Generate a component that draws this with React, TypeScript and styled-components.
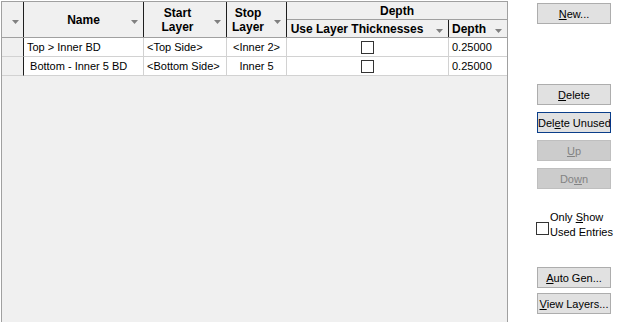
import styled, { createGlobalStyle } from 'styled-components'

const GlobalStyle = createGlobalStyle`
  html, body {
    margin: 0;
    padding: 0;
    background: #ffffff;
  }
  body {
    font-family: "Liberation Sans", Arial, sans-serif;
    font-size: 11px;
    color: #000000;
  }
`

const cols = '22px 120px 83px 60px 162px 58px'

const Page = styled.div`
  display: flex;
  align-items: flex-start;
  width: 620px;
  height: 322px;
  overflow: hidden;
`

const GridPanel = styled.div`
  box-sizing: border-box;
  margin: 1px 0 0 1px;
  width: 507px;
  height: 321px;
  background: #f0f0f0;
  border: 1px solid #a0a0a0;
  border-bottom: none;
`

const Header = styled.div`
  display: grid;
  grid-template-columns: ${cols};
  grid-template-rows: 18px 17px;
  border-bottom: 1px solid #a0a0a0;
`

const HeadCell = styled.div<{ $pr?: number; $left?: boolean; $last?: boolean }>`
  position: relative;
  box-sizing: border-box;
  display: flex;
  align-items: center;
  justify-content: ${p => (p.$left ? 'flex-start' : 'center')};
  text-align: center;
  padding: 0 ${p => p.$pr ?? 0}px 0 ${p => (p.$left ? 3 : 0)}px;
  border-right: ${p => (p.$last ? 'none' : '1px solid #1e1e1e')};
  font-size: 12px;
  font-weight: bold;
  line-height: 14px;
  white-space: nowrap;
`

const TallCell = styled(HeadCell)`
  grid-row: 1 / 3;
`

const GroupCell = styled(HeadCell)`
  grid-column: 5 / 7;
  border-bottom: 1px solid #a0a0a0;
`

const Arrow = styled.svg`
  position: absolute;
  right: 5px;
  top: 50%;
`

const SelArrow = styled(Arrow)`
  right: auto;
  left: 10px;
`

const Row = styled.div`
  display: grid;
  grid-template-columns: ${cols};
  height: 19px;
`

const SelCell = styled.div`
  box-sizing: border-box;
  background: #f0f0f0;
  border-right: 1px solid #1e1e1e;
  border-bottom: 1px solid #d2d2d2;
`

const Cell = styled.div<{ $center?: boolean; $last?: boolean }>`
  box-sizing: border-box;
  display: flex;
  align-items: center;
  justify-content: ${p => (p.$center ? 'center' : 'flex-start')};
  padding-left: ${p => (p.$center ? 0 : 3)}px;
  background: #ffffff;
  border-right: ${p => (p.$last ? 'none' : '1px solid #d2d2d2')};
  border-bottom: 1px solid #d2d2d2;
  white-space: pre;
  overflow: hidden;
`

const Box = styled.span`
  display: inline-block;
  box-sizing: border-box;
  width: 13px;
  height: 13px;
  background: #ffffff;
  border: 1px solid #333333;
`

const Side = styled.div`
  display: flex;
  flex-direction: column;
  width: 74px;
  margin-left: 29px;
  padding-top: 3px;
`

const Btn = styled.button<{ $mt?: number; $focus?: boolean }>`
  box-sizing: border-box;
  width: 74px;
  height: 21px;
  margin: ${p => p.$mt ?? 0}px 0 0 0;
  padding: 0;
  background: #e1e1e1;
  border: 1px solid ${p => (p.$focus ? '#0a3e8a' : '#adadad')};
  font: 11px "Liberation Sans", Arial, sans-serif;
  color: #000000;
  white-space: nowrap;

  &:disabled {
    background: #cccccc;
    border-color: #bfbfbf;
    color: #838383;
  }
`

const CheckRow = styled.label`
  display: flex;
  align-items: center;
  gap: 1px;
  margin: 21px 0 0 -1px;
  line-height: 15px;
  white-space: nowrap;
`

const CheckBox = styled(Box)`
  margin-top: 6px;
  flex-shrink: 0;
`

const DropArrow = ({ sel }: { sel?: boolean }) => {
  const Comp = sel ? SelArrow : Arrow
  return (
    <Comp width="7" height="4" viewBox="0 0 7 4">
      <polygon points="0,0 7,0 3.5,4" fill="#808080" />
    </Comp>
  )
}

const rows = [
  { name: 'Top > Inner BD', start: '<Top Side>', stop: '<Inner 2>', depth: '0.25000' },
  { name: ' Bottom - Inner 5 BD', start: '<Bottom Side>', stop: 'Inner 5', depth: '0.25000' },
]

const App = () => {
  return (
    <Page>
      <GlobalStyle />
      <GridPanel>
        <Header>
          <TallCell>
            <DropArrow sel />
          </TallCell>
          <TallCell>
            Name
            <DropArrow />
          </TallCell>
          <TallCell $pr={15}>
            Start
            <br />
            Layer
            <DropArrow />
          </TallCell>
          <TallCell $pr={17}>
            Stop
            <br />
            Layer
            <DropArrow />
          </TallCell>
          <GroupCell $last>Depth</GroupCell>
          <HeadCell $pr={21}>
            Use Layer Thicknesses
            <DropArrow />
          </HeadCell>
          <HeadCell $left $last>
            Depth
            <DropArrow />
          </HeadCell>
        </Header>
        {rows.map(r => (
          <Row key={r.name}>
            <SelCell />
            <Cell>{r.name}</Cell>
            <Cell>{r.start}</Cell>
            <Cell $center>{r.stop}</Cell>
            <Cell $center>
              <Box />
            </Cell>
            <Cell $last>{r.depth}</Cell>
          </Row>
        ))}
      </GridPanel>
      <Side>
        <Btn>
          <u>N</u>ew...
        </Btn>
        <Btn $mt={60}>
          <u>D</u>elete
        </Btn>
        <Btn $mt={7} $focus>
          Del<u>e</u>te Unused
        </Btn>
        <Btn $mt={7} disabled>
          <u>U</u>p
        </Btn>
        <Btn $mt={7} disabled>
          Do<u>w</u>n
        </Btn>
        <CheckRow>
          <CheckBox />
          <span>
            Only <u>S</u>how
            <br />
            Used Entries
          </span>
        </CheckRow>
        <Btn $mt={27}>
          <u>A</u>uto Gen...
        </Btn>
        <Btn $mt={5}>
          <u>V</u>iew Layers...
        </Btn>
      </Side>
    </Page>
  )
}

export default App
